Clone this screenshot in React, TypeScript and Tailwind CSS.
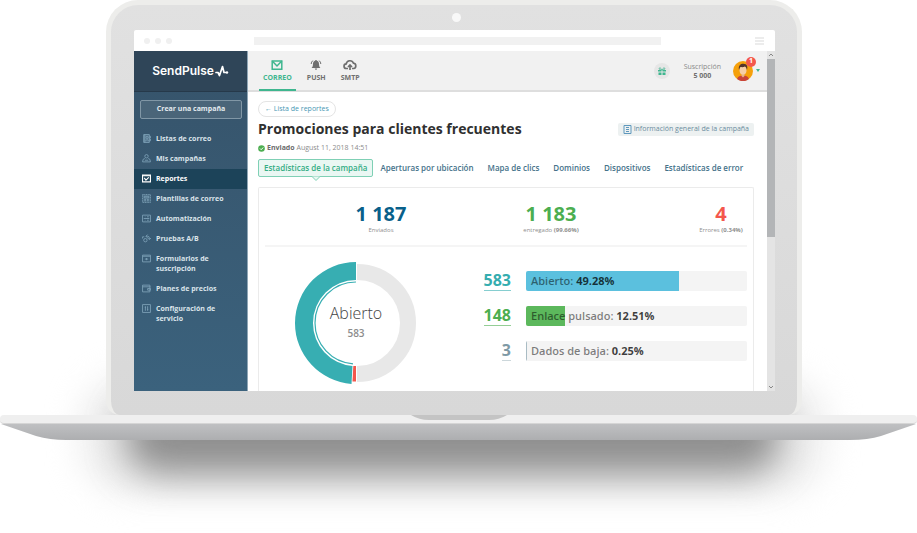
import type { ReactNode } from 'react';

type MenuItem = { label: string; icon: ReactNode; active?: boolean };

const menu: MenuItem[] = [
  { label: 'Listas de correo', icon: <><path d="M3 1h10v14H3z" fill="currentColor" fillOpacity=".35" /><path d="M5 1v14M13 4h2v3h-2M13 9h2v3h-2" /><circle cx="9" cy="6" r="2" /><path d="M6 12q3-4 6 0" /></> },
  { label: 'Mis campañas', icon: <><path d="M5 8Q1 8 1 14h14q0-6-4-6" /><circle cx="8" cy="4" r="3" /><path d="M5 11h6" /></> },
  { label: 'Reportes', active: true, icon: <><path d="M1 2h14v12H1z" /><path d="M1 3h14M4 7l3 4 5-5" /></> },
  { label: 'Plantillas de correo', icon: <><path d="M1 1h14v14H1z" strokeDasharray="2 1" fill="currentColor" fillOpacity=".25" /><path d="M4 4h8v3H4zM4 10h3M9 10h3M4 12h3M9 12h3" /></> },
  { label: 'Automatización', icon: <><path d="M1 2h14v12H1z" /><path d="M3 8h10M5 5h1M9 5h3M5 11h1M9 11h3" /></> },
  { label: 'Pruebas A/B', icon: <><circle cx="6" cy="11" r="3" /><path d="M7 4h3a3 3 0 0 1 3 3v2M10 7l3 3 3-3M10 1L7 4l3 3M1 8V5h3" /></> },
  { label: 'Formularios de suscripción', icon: <><path d="M1 2h14v12H1z" /><path d="M1 4h14M5 9h6M8 7v4" /></> },
  { label: 'Planes de precios', icon: <><path d="M1 2h13v12H1zM1 5h14M10 8h5v3h-5z" /></> },
  { label: 'Configuración de servicio', icon: <><path d="M1 1h14v14H1z" /><path d="M6 4v8M10 4v8M5 6h2M9 10h2" /></> },
];

const tabs = ['Aperturas por ubicación', 'Mapa de clics', 'Dominios', 'Dispositivos', 'Estadísticas de error'];

const bars = [
  { label: 'Abierto:', value: '49.28%', count: '583', width: 69.3, fill: 'bg-[#5bc0de]', text: 'text-[#35adb0] border-[#35adb0]/60' },
  { label: 'Enlace pulsado:', value: '12.51%', count: '148', width: 17.7, fill: 'bg-[#5cb85c]', text: 'text-[#4cae50] border-[#4cae50]/60' },
  { label: 'Dados de baja:', value: '0.25%', count: '3', width: 0.4, fill: 'bg-[#a9bcc4]', text: 'text-[#7f9aa6] border-[#7f9aa6]/40' },
];

function Sidebar() {
  return (
    <aside className="w-[114px] shrink-0 border-r border-[#8fa6b6] bg-linear-to-b from-[#36536a] to-[#3b627d]">
      <div className="flex h-[41px] items-center justify-center gap-px border-b border-[#26394a] bg-[#2f4558] text-white">
        <span className="font-[Inter,sans-serif] text-[12px] font-semibold">SendPulse</span>
        <svg viewBox="0 0 14 12" className="h-3 w-3.5" fill="none" stroke="currentColor" strokeWidth="1.700" strokeLinecap="round" strokeLinejoin="round">
          <path d="M1 7.500h2L4.500 10.500 7.500 1.500 9 7.500h2" />
          <circle cx="12" cy="7.500" r="1.200" fill="currentColor" stroke="none" />
        </svg>
      </div>
      <button className="mx-1.5 mt-2 block h-[19px] w-[102px] rounded-xs border border-[#8197a6] bg-[#4a6579] text-[7px] font-bold text-[#e4ebef]">
        Crear una campaña
      </button>
      <nav className="mt-2.5">
        {menu.map((item) => (
          <a
            key={item.label}
            href="#"
            className={`flex items-start gap-[5px] py-[5px] pr-5 pl-2 text-[7px] leading-[10px] font-bold ${item.active ? 'bg-[#1c4359] text-white' : 'text-[#dbe4ea]'}`}
          >
            <svg viewBox="0 0 16 16" className={`size-[9px] shrink-0 ${item.active ? 'text-white' : 'text-[#7c9fb5]'}`} fill="none" stroke="currentColor" strokeWidth={item.active ? 2 : 1.6}>
              {item.icon}
            </svg>
            <span>{item.label}</span>
          </a>
        ))}
      </nav>
    </aside>
  );
}

function TopBar() {
  return (
    <header className="flex h-[41px] justify-between border-b-2 border-[#dedede] bg-[#f1f1f1] pr-[7px] pl-[11px] text-[7px] font-bold text-[#6f6f6f]">
      <nav className="flex h-10 gap-[7px] leading-[10px]">
        <a href="#" className="flex flex-col items-center gap-[2px] border-b-2 border-[#3fb68f] px-1 pt-2 text-[#3fb68f]">
          <svg viewBox="0 0 12 12" className="size-3" fill="none" stroke="currentColor" strokeWidth="1.500">
            <path d="M1.200 2h9.600v8.200H1.200z" />
            <path d="M1.200 2L6 7l4.800-5" />
          </svg>
          CORREO
        </a>
        <a href="#" className="flex flex-col items-center gap-[2px] px-1 pt-2">
          <svg viewBox="0 0 12 12" className="size-3" fill="currentColor">
            <path d="M6 1a1 1 0 0 1 1 .8C8.500 2.200 9 3.500 9 5c0 2 .6 3 1.400 4H1.600C2.400 8 3 7 3 5c0-1.500.5-2.800 2-3.200A1 1 0 0 1 6 1zM4.800 9.600h2.400a1.200 1.200 0 0 1-2.400 0z" />
            <path d="M2.800 1.600Q1.200 3 1.200 5M9.200 1.600Q10.800 3 10.800 5" fill="none" stroke="currentColor" />
          </svg>
          PUSH
        </a>
        <a href="#" className="flex flex-col items-center gap-[2px] px-1 pt-2">
          <svg viewBox="0 0 14 12" className="h-3 w-3.5" fill="none" stroke="currentColor" strokeWidth="1.700">
            <path d="M5 9.500H3.500a2.300 2.300 0 0 1-.3-4.600A3.800 3.800 0 0 1 10.500 4.200a2.700 2.700 0 0 1 .2 5.300H9M7 11V6M5 8l2-2 2 2" />
          </svg>
          SMTP
        </a>
      </nav>
      <div className="flex items-center">
        <button aria-label="Regalos" className="flex size-4 items-center justify-center rounded-full bg-[#e6e6e6] text-[#3fb68f]">
          <svg viewBox="0 0 8 8" className="size-2">
            <path d="M0 3h3.500v1.500H0zM4.500 3H8v1.500H4.500zM.5 5.500h3V8h-3zM4.500 5.500h3V8h-3z" fill="currentColor" />
            <path d="M3.500 3C1.500 3 1 2 1.200 1.300S3.300.7 3.500 3zM4.500 3C6.500 3 7 2 6.800 1.300S4.700.7 4.500 3z" fill="none" stroke="currentColor" strokeWidth=".8" />
          </svg>
        </button>
        <div className="ml-3.5 text-center leading-[9px]">
          <div className="font-normal text-[#8a8a8a]">Suscripción</div>
          <div>5 000</div>
        </div>
        <button aria-label="Cuenta" className="relative ml-3 flex items-center gap-[3px]">
          <svg viewBox="0 0 20 20" className="size-5">
            <circle cx="10" cy="10" r="10" fill="#f5a00b" />
            <path d="M4 18c1-3 3-3.500 6-3.500s5 .5 6 3.500a10 10 0 0 1-12 0z" fill="#c9443a" />
            <path d="M8.500 12h3v3l-1.500 1.500L8.500 15z" fill="#e8b48c" />
            <ellipse cx="10" cy="9" rx="3.500" ry="4.500" fill="#f6cfa8" />
            <path d="M6 9C5 4 8 2.500 10.500 2.700 14 3 15 5 14 9c-.5-2-1-3-2-3.500C10 6.500 8 6 7.500 6 6.500 7 6.500 8 6 9z" fill="#54352b" />
          </svg>
          <svg viewBox="0 0 4 3" className="h-[3px] w-1" fill="#3fb68f"><path d="M0 0h4L2 3z" /></svg>
          <span className="absolute -top-1 left-[13px] flex size-2.5 items-center justify-center rounded-full bg-[#f4574c] text-[7px] text-white">1</span>
        </button>
      </div>
    </header>
  );
}

function Donut() {
  return (
    <div className="grid w-[122px] shrink-0 place-items-center">
      <svg viewBox="0 0 122 124" className="col-start-1 row-start-1 h-[124px] w-[122px]" fill="none">
        <path d="M62 11a51 51 0 0 1 0 102" stroke="#e8e8e8" strokeWidth="16" />
        <path d="M58.300 105H61V120.500H57.500z" fill="#f4574c" />
        <path d="M61 1A61 61 0 0 0 0 62A61 61 0 0 0 56.500 122.900L57.500 105A43 43 0 0 1 18 62A43 43 0 0 1 61 19z" fill="#37aeb2" />
        <path d="M61 21A41 41 0 0 0 20 62A41 41 0 0 0 58 102.800" stroke="#37aeb2" strokeWidth="1.200" />
      </svg>
      <div className="col-start-1 row-start-1 pb-1 text-center text-[#444]">
        <div className="text-[16px] leading-6 font-light">Abierto</div>
        <div className="text-[10px] leading-4 font-semibold text-[#8c8c8c]">583</div>
      </div>
    </div>
  );
}

function Stat({ value, color, children }: { value: string; color: string; children: ReactNode }) {
  return (
    <div className="w-[60px] text-center whitespace-nowrap">
      <div className={`text-[20px] leading-6 font-bold ${color}`}>{value}</div>
      <div className="text-[6px] leading-2 text-[#8f8f8f]">{children}</div>
    </div>
  );
}

function Report() {
  return (
    <main className="flex min-h-0 flex-1 flex-col pt-[9px] pr-[13px] pl-2.5">
      <a href="#" className="flex h-4 items-center self-start rounded-full border border-[#e4e4e4] px-1.5 text-[7px] text-[#4797b4]">
        ← Lista de reportes
      </a>
      <div className="mt-0.5 flex items-center justify-between">
        <h1 className="text-[14px] leading-5 font-bold text-[#303030]">Promociones para clientes frecuentes</h1>
        <button className="flex h-[13px] items-center gap-0.5 rounded-xs bg-[#edf1f1] px-[5px] text-[7px] text-[#6a8ca0]">
          <svg viewBox="0 0 9 9" className="size-[9px]" fill="none" stroke="#5f98bd">
            <path d="M1 .5h7v8H1zM3 2.500h3M3 4.500h3M3 6.500h3" />
          </svg>
          Información general de la campaña
        </button>
      </div>
      <p className="mt-1 flex items-center gap-0.5 text-[7px] leading-[10px] text-[#8c8c8c]">
        <svg viewBox="0 0 7 7" className="size-[7px]">
          <circle cx="3.500" cy="3.500" r="3.300" fill="#4cae50" />
          <path d="M2 3.500l1.200 1.200L5.200 2.500" fill="none" stroke="#fff" />
        </svg>
        <span><b className="text-[#6c6c6c]">Enviado</b> August 11, 2018 14:51</span>
      </p>
      <div className="mt-1.5 flex text-[8px] font-semibold whitespace-nowrap text-[#45728a]">
        <a href="#" className="relative flex h-[18px] items-center rounded-xs border border-[#7fd0b5] bg-[#eaf7f3] px-[5px] text-[#34ad85]">
          Estadísticas de la campaña
          <svg viewBox="0 0 8 5" className="absolute top-4 left-1/2 h-[5px] w-2 -translate-x-1/2" fill="#eaf7f3" stroke="#7fd0b5"><path d="M0 .5L4 4.500 8 .5" /></svg>
        </a>
        {tabs.map((tab) => (
          <a key={tab} href="#" className="flex items-center px-[7px]">{tab}</a>
        ))}
      </div>
      <section className="mt-2.5 flex-1 rounded-t-xs border border-b-0 border-[#ebebeb] pl-1.5">
        <div className="mr-1.5 flex h-full flex-col">
          <div className="flex justify-between border-b-2 border-[#f5f5f5] pt-3.5 pb-[11px] pl-[86px]">
            <Stat value="1 187" color="text-[#09608a]">Enviados</Stat>
            <Stat value="1 183" color="text-[#4cae50]">entregado <b>(99.66%)</b></Stat>
            <div className="-mr-1">
              <Stat value="4" color="text-[#f4574c]">Errores <b>(0.34%)</b></Stat>
            </div>
          </div>
          <div className="flex pt-3.5 pl-[30px]">
            <Donut />
            <div className="flex flex-1 flex-col gap-[15px] pt-2.5 pl-[63px]">
              {bars.map((bar) => (
                <div key={bar.label} className="flex">
                  <div className="mr-[15px] flex h-5 w-[31px] justify-end">
                    <a href="#" className={`border-b text-[16px] leading-[18px] font-bold ${bar.text}`}>{bar.count}</a>
                  </div>
                  <div className="grid h-5 flex-1 items-center overflow-hidden rounded-xs bg-[#f4f4f4]">
                    <div className={`col-start-1 row-start-1 h-full ${bar.fill}`} style={{ width: `${bar.width}%` }} />
                    <div className="col-start-1 row-start-1 pl-[5px] text-[11px] font-semibold text-black/50">
                      {bar.label} <span className="font-bold text-black/75">{bar.value}</span>
                    </div>
                  </div>
                </div>
              ))}
            </div>
          </div>
        </div>
      </section>
    </main>
  );
}

export default function App() {
  return (
    <div className="relative isolate min-h-screen overflow-hidden bg-white font-['Open_Sans',sans-serif]">
      <div className="absolute top-[375px] right-[90px] left-[80px] -z-10 h-[120px] rounded-[50px] bg-[#eee] blur-[16px]" />
      <div className="absolute top-[400px] right-[136px] left-[124px] -z-10 h-[74px] rounded-[36px] bg-[#8e8e8e] blur-[18px]" />

      <div className="mr-[115px] ml-[106px] rounded-t-[32px] rounded-b-[14px] border-[5px] border-b-0 border-[#ededeb] bg-linear-to-b from-[#e1e1e1] to-[#d8d8d8] pr-[22px] pb-6 pl-[23px]">
        <div className="flex h-[25px] items-center justify-center pl-1">
          <div className="size-[9px] rounded-full bg-[#f8f8f8]" />
        </div>
        <div className="overflow-hidden rounded-t-xs bg-white">
          <div className="flex h-[21px] items-center px-2.5">
            <div className="flex w-[110px] gap-[5px]">
              <span className="size-1.5 rounded-full bg-[#f0f0f0]" />
              <span className="size-1.5 rounded-full bg-[#f0f0f0]" />
              <span className="size-1.5 rounded-full bg-[#f0f0f0]" />
            </div>
            <div className="h-2 flex-1 bg-[#f1f1f1]" />
            <svg viewBox="0 0 9 8" className="mr-px ml-[94px] h-2 w-[9px]" fill="#ececec">
              <path d="M0 0h9v2H0zM0 3h9v2H0zM0 6h9v2H0z" />
            </svg>
          </div>
          <div className="flex h-[340px] overflow-hidden">
            <Sidebar />
            <div className="flex min-w-0 flex-1 flex-col">
              <TopBar />
              <Report />
            </div>
            <div className="flex w-2 flex-col items-center bg-[#e4e4e4]">
              <svg viewBox="0 0 8 8" className="size-2" fill="none" stroke="#888"><path d="M2 5l2-2 2 2" /></svg>
              <div className="h-[178px] w-full bg-[#b3b5b7]" />
              <svg viewBox="0 0 8 8" className="mt-auto size-2" fill="none" stroke="#888"><path d="M2 3l2 2 2-2" /></svg>
            </div>
          </div>
        </div>
      </div>

      <div className="flex h-[9px] justify-center rounded-sm border-b border-[#d5d5d5] bg-[#efefef]">
        <svg viewBox="0 0 96 5" className="h-[5px] w-24" fill="#c4c4c4"><path d="M0 0h96Q88 5 78 5H18Q8 5 0 0z" /></svg>
      </div>
      <svg viewBox="0 0 917 16" preserveAspectRatio="none" className="block h-4 w-full">
        <defs>
          <linearGradient id="under" x1="0" y1="0" x2="0" y2="1">
            <stop offset="0" stopColor="#bfc0c2" />
            <stop offset="1" stopColor="#adaeb0" />
          </linearGradient>
        </defs>
        <path d="M1 0H916L881 12Q868 16 850 16H66Q50 16 36 12z" fill="url(#under)" />
      </svg>
    </div>
  );
}
